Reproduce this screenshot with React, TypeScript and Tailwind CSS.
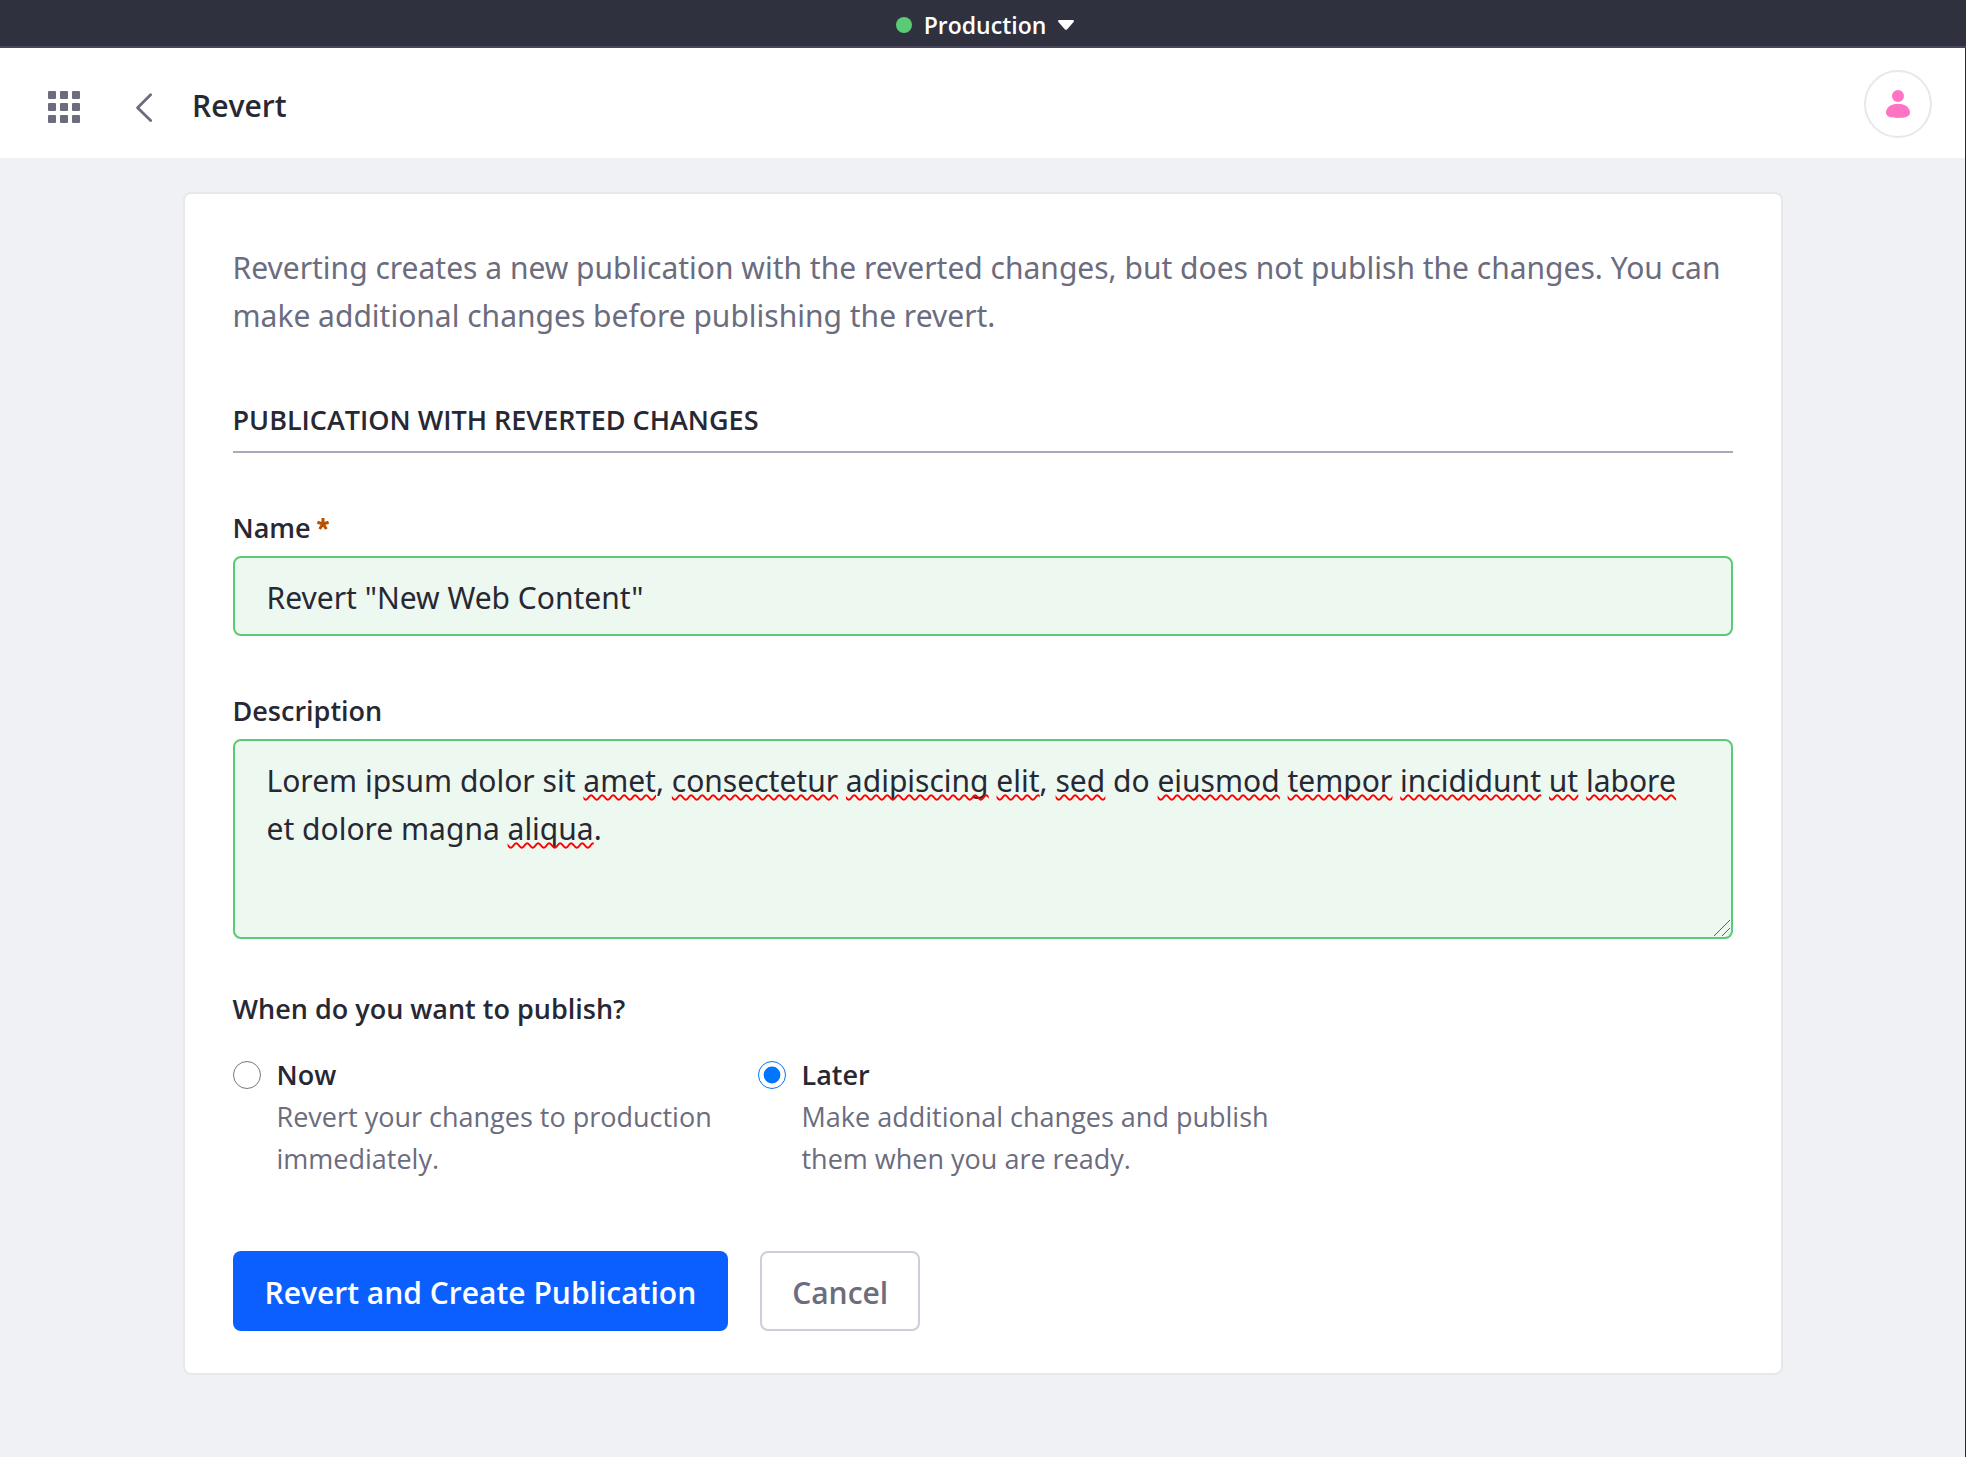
import React, { useState } from "react";

const DESCRIPTION =
  "Lorem ipsum dolor sit amet, consectetur adipiscing elit, sed do eiusmod tempor incididunt ut labore et dolore magna aliqua.";

const MISSPELLED = new Set([
  "amet",
  "consectetur",
  "adipiscing",
  "elit",
  "sed",
  "eiusmod",
  "tempor",
  "incididunt",
  "ut",
  "labore",
  "aliqua",
]);

function SpellingMarks({ text }: { text: string }) {
  return (
    <div
      aria-hidden="true"
      className="pointer-events-none absolute inset-0 whitespace-pre-wrap border-2 border-transparent px-8 pt-4 font-['Noto_Sans',sans-serif] text-[30px] leading-[48px] text-transparent"
    >
      {text.split(/([A-Za-z]+)/).map((part, i) =>
        MISSPELLED.has(part) ? (
          <span
            key={i}
            className="underline decoration-[#ff0000] decoration-wavy decoration-[2px] underline-offset-[2px] [text-decoration-skip-ink:none]"
          >
            {part}
          </span>
        ) : (
          <span key={i}>{part}</span>
        ),
      )}
    </div>
  );
}

function TopBar() {
  return (
    <div className="flex h-12 items-center justify-center border-b-2 border-[#4a465e] bg-[#30313f] pt-[3px] pl-1">
      <button type="button" className="flex items-center text-[23px] leading-[34px] font-semibold text-white">
        <span className="mr-3 size-4 rounded-full bg-[#5aca75]" />
        Production
        <svg viewBox="0 0 16 10" className="ml-3 h-[10px] w-4" fill="currentColor" aria-hidden="true">
          <path d="M1.2 0h13.6c1 0 1.5 1.1.8 1.9L9 9.4c-.5.6-1.500.6-2 0L.4 1.900C-.3 1.100.2 0 1.200 0z" />
        </svg>
      </button>
    </div>
  );
}

function Header() {
  return (
    <header className="flex h-[110px] items-center justify-between bg-white pt-[2px] pr-[33px] pl-12">
      <div className="flex items-center pt-[6px]">
        <button type="button" aria-label="Applications menu" className="text-[#6b6c7e]">
          <svg viewBox="0 0 32 32" className="size-8" fill="currentColor" aria-hidden="true">
            {[0, 12, 24].map((y) =>
              [0, 12, 24].map((x) => <rect key={`${x}-${y}`} x={x} y={y} width="8" height="8" rx="1" />),
            )}
          </svg>
        </button>
        <a href="#back" aria-label="Back" className="ml-14 text-[#6b6c7e]">
          <svg viewBox="0 0 16 30" className="h-[30px] w-4" fill="none" stroke="currentColor" strokeWidth="2.800" strokeLinecap="round" strokeLinejoin="round" aria-hidden="true">
            <path d="M14.600 2.800 1.600 15.700l13 12.800" />
          </svg>
        </a>
        <h1 className="ml-10 pb-[2px] text-[30px] leading-[48px] font-semibold text-[#272833]">Revert</h1>
      </div>
      <button type="button" aria-label="User profile" className="flex size-[68px] items-center justify-center rounded-full border-2 border-[#e7e7ed] text-[#ff73c3]">
        <svg viewBox="0 0 24 28" className="h-7 w-6" fill="currentColor" aria-hidden="true">
          <circle cx="12" cy="6" r="6" />
          <path d="M12 13.700c7.200 0 12 4 12 8.900 0 4.200-4.400 5.400-12 5.400S0 26.800 0 22.600c0-4.900 4.800-8.900 12-8.900z" />
        </svg>
      </button>
    </header>
  );
}

function PublishOption({
  id,
  title,
  text,
  checked,
  onSelect,
}: {
  id: string;
  title: string;
  text: string;
  checked: boolean;
  onSelect: () => void;
}) {
  return (
    <div className="flex w-[525px] items-start">
      <input id={id} type="radio" name="publish" checked={checked} onChange={onSelect} className="mt-[7px] size-7 shrink-0" />
      <label htmlFor={id} className="pl-4 text-[27px] leading-[42px] text-[#6b6c7e]">
        <span className="block font-semibold text-[#272833]">{title}</span>
        {text}
      </label>
    </div>
  );
}

export default function App() {
  const [name, setName] = useState('Revert "New Web Content"');
  const [description, setDescription] = useState(DESCRIPTION);
  const [when, setWhen] = useState("later");

  return (
    <div className="min-h-screen bg-[#f0f1f5] font-['Open_Sans',sans-serif] text-[#272833]">
      <TopBar />
      <div className="min-h-[calc(100vh-48px)] border-r border-[#272833]">
        <Header />
        <main className="px-6 py-[34px]">
          <form
            onSubmit={(e) => e.preventDefault()}
            className="mx-auto max-w-[1600px] rounded-lg border-2 border-[#e7e7ed] bg-white px-12 pt-[50px] pb-[42px]"
          >
            <p className="font-['Noto_Sans',sans-serif] text-[30px] leading-[48px] text-[#6b6c7e]">
              Reverting creates a new publication with the reverted changes, but does not publish the changes. You can
              make additional changes before publishing the revert.
            </p>

            <h2 className="mt-[59px] border-b-2 border-[#a7a9bc] pb-[10px] text-[27px] leading-[42px] font-semibold uppercase">
              Publication with reverted changes
            </h2>

            <label htmlFor="name" className="mt-[54px] flex items-center text-[27px] leading-[42px] font-semibold">
              Name
              <svg viewBox="0 0 12 12" className="mb-2 ml-[6px] size-3 text-[#b95000]" stroke="currentColor" strokeWidth="3" aria-hidden="true">
                <path d="M6 6V0M6 6 .4 4.200M6 6l5.600-1.800M6 6l-3.400 5M6 6l3.400 5" />
              </svg>
            </label>
            <input
              id="name"
              value={name}
              required
              onChange={(e) => setName(e.target.value)}
              className="mt-[7px] block h-20 w-full rounded-lg border-2 border-[#5aca75] bg-[#edf8f0] px-8 pt-[2px] font-['Noto_Sans',sans-serif] text-[30px] outline-none"
            />

            <label htmlFor="description" className="mt-[54px] block text-[27px] leading-[42px] font-semibold">
              Description
            </label>
            <div className="relative mt-[7px]">
              <textarea
                id="description"
                value={description}
                spellCheck={false}
                onChange={(e) => setDescription(e.target.value)}
                className="block h-[200px] w-full resize-none rounded-lg border-2 border-[#5aca75] bg-[#edf8f0] px-8 pt-4 font-['Noto_Sans',sans-serif] text-[30px] leading-[48px] outline-none"
              />
              <SpellingMarks text={description} />
              <svg
                viewBox="0 0 16 16"
                className="pointer-events-none absolute right-[3px] bottom-[3px] size-4"
                fill="none"
                stroke="#5b605d"
                aria-hidden="true"
              >
                <path d="M0 16 16 0M8 16l8-8" />
              </svg>
            </div>

            <fieldset>
              <legend className="pt-[49px] text-[27px] leading-[42px] font-semibold">When do you want to publish?</legend>
              <div className="mt-6 flex">
                <PublishOption
                  id="now"
                  title="Now"
                  text="Revert your changes to production immediately."
                  checked={when === "now"}
                  onSelect={() => setWhen("now")}
                />
                <PublishOption
                  id="later"
                  title="Later"
                  text="Make additional changes and publish them when you are ready."
                  checked={when === "later"}
                  onSelect={() => setWhen("later")}
                />
              </div>
            </fieldset>

            <div className="mt-[71px] flex gap-8 text-[30px] font-semibold">
              <button type="submit" className="h-20 rounded-lg bg-[#0b5fff] px-8 pt-[2px] text-white">
                Revert and Create Publication
              </button>
              <button type="button" className="h-20 rounded-lg border-2 border-[#cdced9] bg-white px-[30px] pt-[2px] text-[#6b6c7e]">
                Cancel
              </button>
            </div>
          </form>
        </main>
      </div>
    </div>
  );
}
